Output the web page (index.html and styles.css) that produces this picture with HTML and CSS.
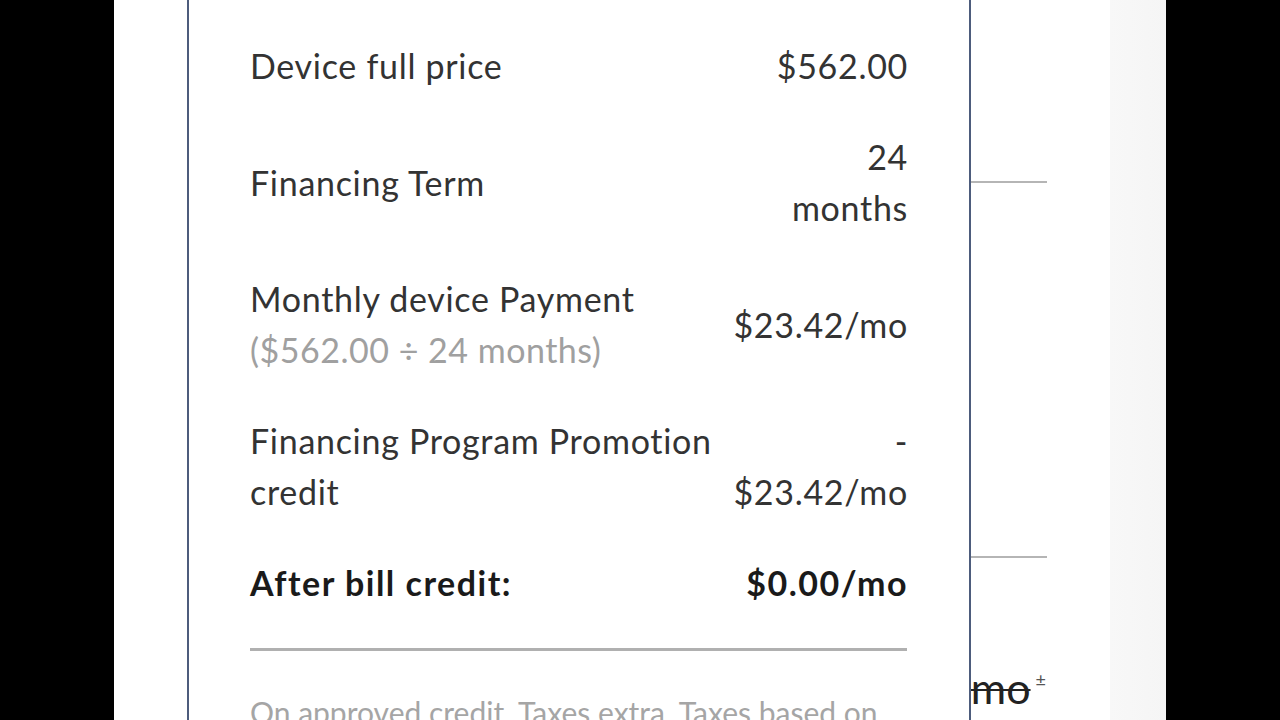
FILE: index.html
```html
<!DOCTYPE html>
<html lang="en">
<head>
<meta charset="utf-8">
<title>Financing details</title>
<link rel="stylesheet" href="styles.css">
</head>
<body>
<div class="screen">
  <div class="page">
    <div class="page-content">
      <div class="page-rule rule-1"></div>
      <div class="page-rule rule-2"></div>
      <div class="page-price"><span class="strike">$0/mo</span><sup>±</sup></div>
    </div>
    <div class="page-gutter"></div>

    <section class="modal">
      <div class="rows">
        <div class="row">
          <div class="label">Device full price</div>
          <div class="value">$562.00</div>
        </div>
        <div class="row">
          <div class="label">Financing Term</div>
          <div class="value">24<br>months</div>
        </div>
        <div class="row">
          <div class="label">Monthly device Payment<div class="sub">($562.00 ÷ 24 months)</div></div>
          <div class="value">$23.42/mo</div>
        </div>
        <div class="row">
          <div class="label">Financing Program Promotion credit</div>
          <div class="value">-<br>$23.42/mo</div>
        </div>
        <div class="row total">
          <div class="label">After bill credit:</div>
          <div class="value">$0.00/mo</div>
        </div>
      </div>
      <hr class="divider">
      <p class="note">On approved credit. Taxes extra. Taxes based on full price of device.</p>
    </section>
  </div>
</div>
</body>
</html>
```

FILE: styles.css
```css
html, body {
  margin: 0;
  padding: 0;
  height: 100%;
  background: #000;
}

.screen {
  display: flex;
  justify-content: center;
  height: 720px;
  overflow: hidden;
}

.page {
  position: relative;
  width: 1052px;
  height: 720px;
  display: flex;
  background: linear-gradient(to right, #f2f2f2 0px, #f9f9f9 5px, #fbfbfb 60px, #ffffff 73px);
  overflow: hidden;
  font-family: Lato, "Open Sans", sans-serif;
  color: #333;
}

.page-content {
  flex: 1;
  position: relative;
  padding-left: 136px;
  padding-right: 63px;
  background: #fff;
  display: flex;
  flex-direction: column;
}

.page-rule {
  height: 2px;
  background: #b5b5b5;
}

.rule-1 { margin-top: 181px; }
.rule-2 { margin-top: 373px; }

.page-price {
  margin-top: 97px;
  text-align: right;
  font-size: 43px;
  line-height: 48px;
  color: #222;
  white-space: nowrap;
}

.strike {
  text-decoration: line-through;
  text-decoration-thickness: 2px;
}

.page-price sup {
  font-size: 18px;
  vertical-align: 18px;
  margin-left: 5px;
  margin-right: 1px;
  color: #555;
}

.page-gutter {
  width: 56px;
  background: linear-gradient(to right, #f8f8f8, #f5f5f5);
}

.modal {
  position: absolute;
  left: 73px;
  top: 0;
  width: 784px;
  height: 720px;
  box-sizing: border-box;
  background: #fff;
  border-left: 2px solid #4d5c7c;
  border-right: 2px solid #4d5c7c;
  padding: 40px 61px 0 61px;
}

.rows {
  display: flex;
  flex-direction: column;
  gap: 40px;
}

.row {
  display: flex;
  justify-content: space-between;
  align-items: center;
  font-size: 34px;
  line-height: 51px;
  letter-spacing: 0.7px;
  color: #333;
}

.label {
  max-width: 475px;
}

.sub {
  color: #a0a0a0;
  letter-spacing: 0.5px;
}

.value {
  text-align: right;
  white-space: nowrap;
}

.total {
  font-weight: 700;
  letter-spacing: 1.5px;
  color: #1a1a1a;
}

.divider {
  margin: 40px 1px 0 0;
  border: 0;
  height: 3px;
  background: #b0b0b0;
}

.note {
  margin: 41px 0 0;
  font-size: 30px;
  line-height: 40px;
  color: #a5a5a5;
}
```
